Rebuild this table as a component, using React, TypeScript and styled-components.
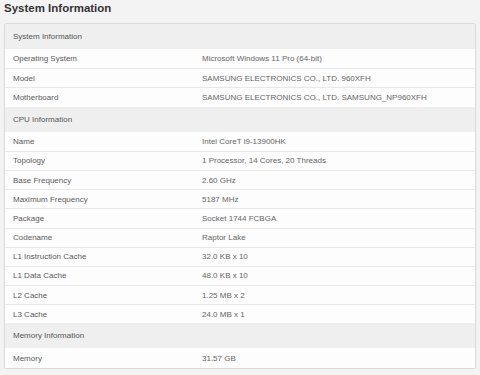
import React from 'react'
import styled, { createGlobalStyle } from 'styled-components'

const GlobalStyle = createGlobalStyle`
  body {
    margin: 0;
    background: #f3f3f3;
    font-family: "Liberation Sans", Arial, sans-serif;
  }
`

const Page = styled.div`
  padding: 0 4px;
`

const Title = styled.h1`
  margin: 0;
  height: 23px;
  line-height: 17px;
  font-size: 11.5px;
  font-weight: bold;
  color: #333;
`

const Card = styled.div`
  background: #fdfdfd;
  border: 1px solid #dcdcdc;
  border-radius: 2px;
  box-shadow: 0 1px 2px rgba(0, 0, 0, 0.06);
  overflow: hidden;
`

const SectionHeader = styled.div`
  height: 25px;
  display: flex;
  align-items: center;
  padding: 0 8px;
  background: #efefef;
  font-size: 8px;
  color: #555;
`

const Row = styled.div<{ first?: boolean }>`
  display: grid;
  grid-template-columns: 197px 1fr;
  height: 19.2px;
  align-items: center;
  border-top: ${({ first }) => (first ? 'none' : '1px solid #e8e8e8')};
  box-sizing: border-box;
  font-size: 8px;
  color: #5a5a5a;
`

const Label = styled.div`
  padding-left: 8px;
`

const Value = styled.div`
  color: #666;
`

const sections: { title: string; rows: [string, string][] }[] = [
  {
    title: 'System Information',
    rows: [
      ['Operating System', 'Microsoft Windows 11 Pro (64-bit)'],
      ['Model', 'SAMSUNG ELECTRONICS CO., LTD. 960XFH'],
      ['Motherboard', 'SAMSUNG ELECTRONICS CO., LTD. SAMSUNG_NP960XFH'],
    ],
  },
  {
    title: 'CPU Information',
    rows: [
      ['Name', 'Intel CoreT i9-13900HK'],
      ['Topology', '1 Processor, 14 Cores, 20 Threads'],
      ['Base Frequency', '2.60 GHz'],
      ['Maximum Frequency', '5187 MHz'],
      ['Package', 'Socket 1744 FCBGA'],
      ['Codename', 'Raptor Lake'],
      ['L1 Instruction Cache', '32.0 KB x 10'],
      ['L1 Data Cache', '48.0 KB x 10'],
      ['L2 Cache', '1.25 MB x 2'],
      ['L3 Cache', '24.0 MB x 1'],
    ],
  },
  {
    title: 'Memory Information',
    rows: [['Memory', '31.57 GB']],
  },
]

const App: React.FC = () => {
  return (
    <Page>
      <GlobalStyle />
      <Title>System Information</Title>
      <Card>
        {sections.map(section => (
          <React.Fragment key={section.title}>
            <SectionHeader>{section.title}</SectionHeader>
            {section.rows.map(([label, value], idx) => (
              <Row key={label} first={idx === 0}>
                <Label>{label}</Label>
                <Value>{value}</Value>
              </Row>
            ))}
          </React.Fragment>
        ))}
      </Card>
    </Page>
  )
}

export default App
